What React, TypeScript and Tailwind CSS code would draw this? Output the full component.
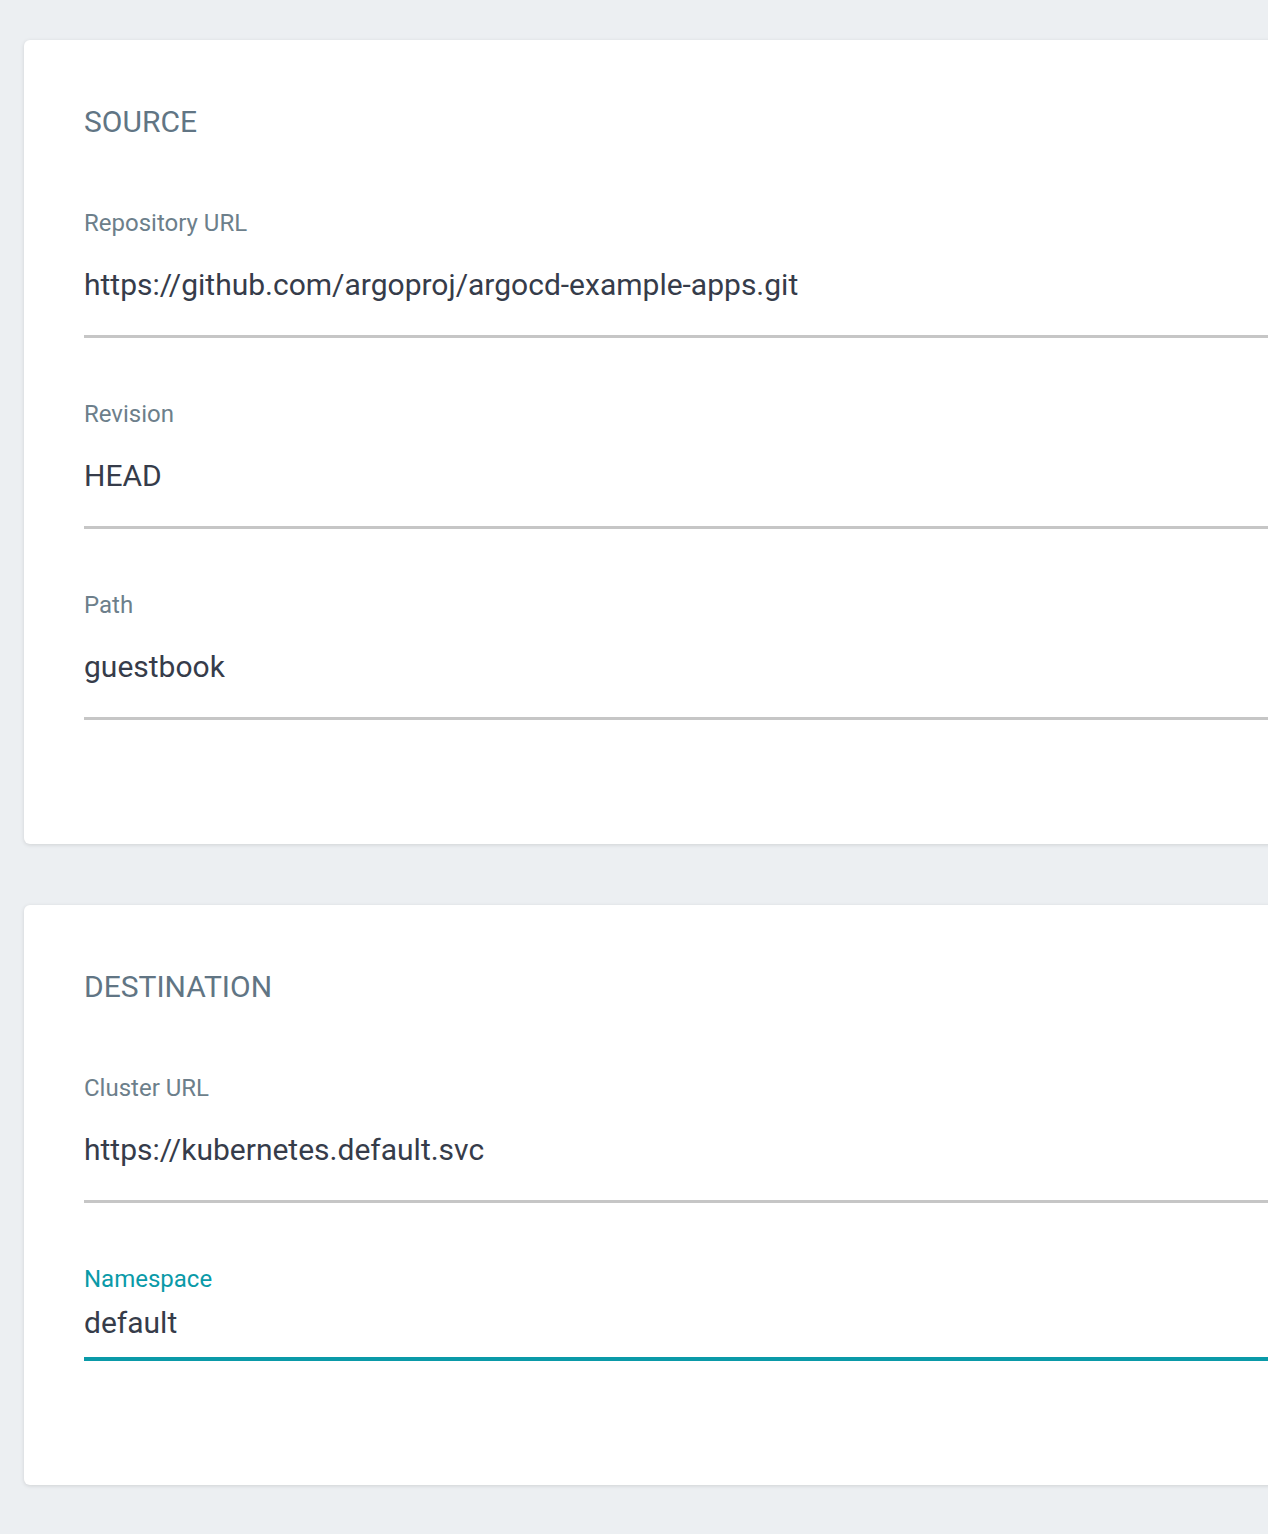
import React from "react";

type Field = { label: string; value: string; focused?: boolean };

function FieldRow({ label, value, focused, first }: Field & { first: boolean }) {
  const top = first ? "pt-[69px]" : "pt-[62px]";
  if (focused) {
    return (
      <div className={top}>
        <div className="text-[24px] leading-[28px] text-[#0a9aa8]">{label}</div>
        <div className="mt-[12px] text-[30px] leading-[36px] text-[#363c4a]">{value}</div>
        <div className="mt-[16px] h-[4px] bg-[#0a9aa8]" />
      </div>
    );
  }
  return (
    <div className={top}>
      <div className="text-[24px] leading-[28px] text-[#6d7f8b]">{label}</div>
      <div className="mt-[30px] text-[30px] leading-[36px] text-[#363c4a]">{value}</div>
      <div className="mt-[32px] h-[3px] bg-[#c6c6c6]" />
    </div>
  );
}

function Card({ title, fields }: { title: string; fields: Field[] }) {
  return (
    <div className="mr-[-60px] rounded-[6px] bg-white pl-[60px] pr-[60px] pt-[64px] pb-[124px] shadow-[0_1px_4px_rgba(0,0,0,0.12)]">
      <div className="text-[30px] leading-[36px] text-[#617584]">{title}</div>
      {fields.map((f, i) => (
        <FieldRow key={i} {...f} first={i === 0} />
      ))}
    </div>
  );
}

export default function App() {
  return (
    <div
      className="min-h-[1534px] w-full overflow-hidden bg-[#eceff2] pl-[24px] pt-[40px] pb-[49px]"
      style={{ fontFamily: "Roboto, 'Liberation Sans', sans-serif" }}
    >
      <div className="flex flex-col gap-[61px]">
        <Card
          title="SOURCE"
          fields={[
            { label: "Repository URL", value: "https://github.com/argoproj/argocd-example-apps.git" },
            { label: "Revision", value: "HEAD" },
            { label: "Path", value: "guestbook" },
          ]}
        />
        <Card
          title="DESTINATION"
          fields={[
            { label: "Cluster URL", value: "https://kubernetes.default.svc" },
            { label: "Namespace", value: "default", focused: true },
          ]}
        />
      </div>
    </div>
  );
}
